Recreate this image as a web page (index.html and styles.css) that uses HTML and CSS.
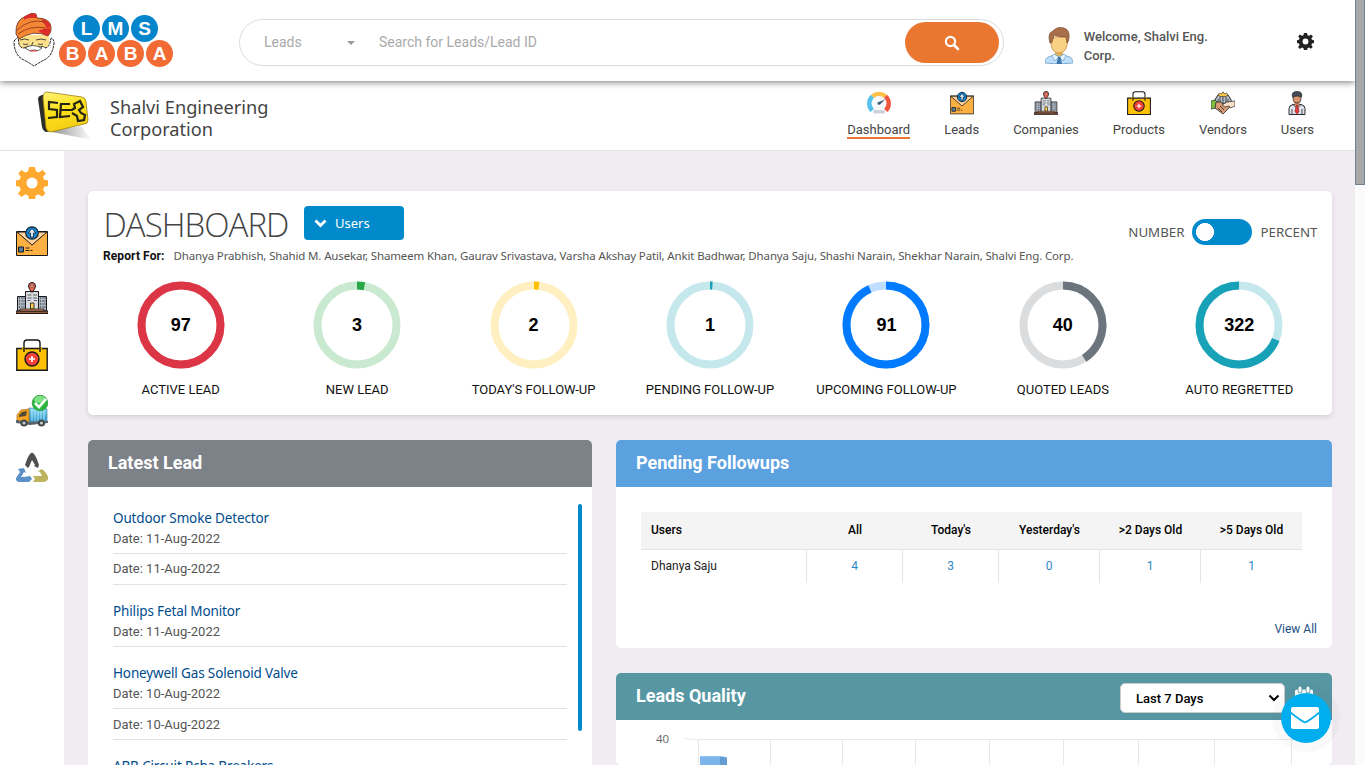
FILE: index.html
```html
<!DOCTYPE html>
<html lang="en">
<head>
<meta charset="utf-8">
<title>LMS Baba - Dashboard</title>
<link rel="stylesheet" href="styles.css">
</head>
<body>
<svg class="sprite" width="0" height="0">
  <symbol id="mail" viewBox="0 0 32 32">
    <path d="M.5 6.500h31v24H.5z" fill="#ffb043" stroke="#17191c"/>
    <path d="M1 7h30L16 20z" fill="#ffd09a" stroke="#17191c"/>
    <circle cx="16" cy="8" r="6.200" fill="#1689d8" stroke="#10202c" stroke-width="1.200"/>
    <path d="M16 3.500l-4 4.500h2.500v4h3V8H20z" fill="#dceaf5" stroke="#10202c" stroke-width=".8"/>
    <path d="M2.500 22h5v5h-5z" fill="#4e7f9c" stroke="#17191c"/>
    <path d="M9.500 23h4M9.500 25.500h4M14.500 25.500h2" stroke="#222" fill="none"/>
  </symbol>
  <symbol id="building" viewBox="0 0 32 32">
    <path d="M1.500 14.500h8V29h-8zM22.500 14.500h8V29h-8z" fill="#adb5bf" stroke="#17191c"/>
    <path d="M3.500 15v12M6 15v12M8 15v12M24.500 15v12M27 15v12M29 15v12" stroke="#59616b" stroke-width=".9" stroke-dasharray="2 1"/>
    <path d="M9.500 9.500h13V29h-13z" fill="#d7dbe0" stroke="#17191c"/>
    <path d="M11.500 13h4M17 13h4M11.500 16h4M17 16h4M11.500 18.500h3M18 18.500h3" stroke="#59616b"/>
    <path d="M14.500 21h3.500v6h-3.500z" fill="#ffc94b" stroke="#17191c" stroke-width=".8"/>
    <path d="M0 29h32v2.500H0z" fill="#9a5638" stroke="#17191c"/><path d="M4 27h24v2H4z" fill="#c98255" stroke="#17191c" stroke-width=".7"/>
    <path d="M16 10.500Q12.500 6.500 12.500 4a3.500 3.500 0 017 0Q19.500 6.500 16 10.500z" fill="#ef6352" stroke="#17191c"/>
    <circle cx="16" cy="4" r="1.300" fill="#ffe0b6" stroke="#17191c" stroke-width=".5"/>
  </symbol>
  <symbol id="bag" viewBox="0 0 32 32">
    <path d="M.8 9.500h30.400v21.700H.8z" fill="#ffc107" stroke="#17191c" stroke-width="1.400"/>
    <path d="M6 9h3M23 9h3" stroke="#ffc107" stroke-width="2"/>
    <path d="M8 13V4q0-3 3-3h10q3 0 3 3v9" fill="none" stroke="#17191c" stroke-width="1.400"/>
    <circle cx="16" cy="20" r="7" fill="#f44336" stroke="#17191c" stroke-width="1.400"/>
    <path d="M16 17v6M13 20h6" stroke="#fff" stroke-width="1.600"/>
  </symbol>
  <symbol id="cog" viewBox="0 0 32 32">
    <path fill-rule="evenodd" d="M13 0h6l.8 4.200 3 1.200L26.500 3 30 6.500l-3 3.300 1.200 3L32 13.500v5.500l-3.800.8-1.200 3 2.500 3.500-3.500 3.500-3.300-2.500-3 1.200L19 32h-6l-.8-3.500-3-1.200L5.500 30 2 26.500l2.800-3.700-1.200-3L0 19v-5.500l3.600-.7 1.200-3L2.200 6.500 5.500 3l3.700 2.400 3-1.200zM16 10.500a5.500 5.500 0 100 11 5.500 5.500 0 000-11z"/>
  </symbol>
</svg>

<header class="topbar">
  <div class="brand">
    <svg class="baba" width="42" height="54" viewBox="0 0 42 54">
      <path d="M5 22h31v14H5z" fill="#fde08a"/>
      <path d="M1 28q3-3 4-4l1 7q1 4 5 4 5-3 9 0 2 1 4 0 6-3 8 0 4-1 5-5l1-5q3 1 3 5-1 11-8 16-6 3-12 7-6-4-12-7Q1 41 1 28z" fill="#fff" stroke="#222" stroke-dasharray="3 .7"/>
      <path d="M3 21Q2 7 13 3 18-1 23 1l1 4q13 0 14 9 1 5-3 9-14-7-29 3z" fill="#f58634" stroke="#5d231c" stroke-width=".8"/>
      <path d="M11 4q7-5 12-3l1 4q-9-1-13 2zM25 18q6-3 12-3 1 5-3 8zM28 6q8 1 10 8l-4 1z" fill="#dd2b2b"/>
      <path d="M4 17Q17 5 32 9M5 21q12-9 28-6" fill="none" stroke="#80331b" stroke-width=".8"/>
      <path d="M7 27q5-2 9 0M23 27q5-2 10 0M10 31q3 1 5 0M25 31q3 1 5 0M20 29l-2 5h5" fill="none" stroke="#333" stroke-width=".9"/>
      <path d="M12 35q7-5 17 0-3 4-8 2-5 2-9-2z" fill="#fff" stroke="#222" stroke-width=".7"/>
      <path d="M17 38h7" stroke="#d33"/>
    </svg>
    <div class="balls">
      <div class="ball-row top"><span>L</span><span>M</span><span>S</span></div>
      <div class="ball-row bottom"><span>B</span><span>A</span><span>B</span><span>A</span></div>
    </div>
  </div>
  <div class="search">
    <span class="search-type">Leads</span><i class="caret"></i>
    <span class="search-hint">Search for Leads/Lead ID</span>
    <span class="search-btn"><svg width="16" height="16" viewBox="0 0 16 16"><circle cx="6.500" cy="6.500" r="4.600" fill="none" stroke="#fff" stroke-width="2.200"/><path d="M10 10l4 4" stroke="#fff" stroke-width="2.600" stroke-linecap="round"/></svg></span>
  </div>
  <div class="welcome">
    <svg width="28" height="37" viewBox="0 0 28 37">
      <path d="M0 36q0-6 6-7l5-2h6l5 2q6 1 6 7-14 2-28 0z" fill="#bfe0fb" stroke="#6b9cc4" stroke-width=".8"/>
      <path d="M10 22h8v6l-4 3-4-3z" fill="#dfb35c"/>
      <path d="M9 27l5 3-4 4-3-5zM19 27l-5 3 4 4 3-5z" fill="#e3f3ff" stroke="#6b9cc4" stroke-width=".7"/>
      <path d="M13 30h2.500l1.500 7h-5.500z" fill="#3e78ad"/>
      <path d="M6 10h16.500q1 16-8.500 16T6 10z" fill="#f9d185" stroke="#b98a46" stroke-width=".7"/>
      <path d="M5 16Q2 6 8 4q4-5 11-3 7 2 4.500 13l-1.500 2-1-6q-8 0-12-2-1 5-2.500 8z" fill="#a96f4b" stroke="#7c4c30" stroke-width=".7"/>
    </svg>
    <span>Welcome, Shalvi Eng. Corp.</span>
  </div>
  <svg class="settings" width="17" height="17"><use href="#cog"/></svg>
</header>

<div class="subbar">
  <div class="company">
    <svg width="56" height="50" viewBox="0 0 56 50">
      <defs><linearGradient id="shade" x1="0" x2="1"><stop offset="0" stop-color="#888"/><stop offset="1" stop-color="#fff"/></linearGradient>
      <linearGradient id="gold" x2=".3" y2="1"><stop offset="0" stop-color="#fff27a"/><stop offset=".5" stop-color="#ffe21c"/><stop offset="1" stop-color="#f3ce16"/></linearGradient></defs>
      <path d="M10 40l34-5 11 14z" fill="url(#shade)"/>
      <path d="M1 8q0-3 4-4l8-2 3 38-7 1q-3-1-4-5z" fill="#2b2b29"/>
      <path d="M10 1l35 5q4 1 4 5l2 18q0 4-4 4L14 41q-4 0-5-4L6 7q0-6 4-6z" fill="url(#gold)" stroke="#9a8211" stroke-width=".8"/>
      <path d="M21 12l-9-1v7l8 1v7l-9 1M33 13l-9 0-1 13 10-1M24 19h11l3-2-1-4 6-3 3 6-4 3 2 3 4 2-1 5-6 1-1-5-5-3" fill="none" stroke="#242315" stroke-width="2.200"/>
    </svg>
    <h2>Shalvi Engineering Corporation</h2>
  </div>
  <nav class="menu">
    <a class="active"><svg width="24" height="24" viewBox="0 0 24 24"><path d="M3.500 21A12 12 0 014 3.700l4 4Q5 12 7 18z" fill="#54c0eb"/><path d="M4 3.700a12 12 0 0116 0l-4 4H8z" fill="#ffc247"/><path d="M20 3.700A12 12 0 0120.500 21L17 18q2-6-1-10.300z" fill="#f05540"/><circle cx="12" cy="12.500" r="7.500" fill="#f8f9fb"/><path d="M10.500 11.500L18 8.500l-5 5q-3 1-2.500-2z" fill="#3c5d76"/><rect x="6" y="19" width="12" height="3.500" rx="1.700" fill="#ccd1dd"/></svg><span>Dashboard</span></a>
    <a><svg width="24" height="24"><use href="#mail"/></svg><span>Leads</span></a>
    <a><svg width="24" height="24"><use href="#building"/></svg><span>Companies</span></a>
    <a><svg width="24" height="24"><use href="#bag"/></svg><span>Products</span></a>
    <a><svg width="24" height="24" viewBox="0 0 24 24"><path d="M4 13q-1-4 1-6l2-3h10l2 3q2 2 1 6z" fill="#b7bcc2" stroke="#252a2e"/><path d="M7 4l1.500-2 2 1L12 .7l1.500 2.300 2-1L17 4l-2 1.500H9z" fill="#ffc845" stroke="#252a2e" stroke-width=".6"/><path d="M9 6v6M15 6v6M7 8v4M17 8v4M12 6v6" stroke="#454d55"/><path d="M0 10l4-1 2 2-1 6-5 1z" fill="#7fc13e" stroke="#252a2e" stroke-width=".7"/><path d="M5 11l5 0 2 2 5-2 2 5-7 7-8-6z" fill="#d79a72" stroke="#252a2e" stroke-width=".8"/><path d="M24 10l-8 1-5 3 3 2 4-1 1 2 5-2z" fill="#fde0c5" stroke="#252a2e" stroke-width=".7"/><path d="M7 17l4 4M9 15l4 4" stroke="#252a2e" stroke-width=".8"/></svg><span>Vendors</span></a>
    <a><svg width="24" height="24" viewBox="0 0 24 24"><path d="M4 23.500v-6q0-3 4-4h8q4 1 4 4v6z" fill="#e1e4ea" stroke="#252a2e"/><path d="M9.500 10h5v4L12 16l-2.500-2z" fill="#c97d58"/><path d="M8 4h8v4q0 4-4 4T8 8z" fill="#dc946c" stroke="#252a2e" stroke-width=".7"/><path d="M7.500 6Q6 .5 12 .5T16.500 6q-4.500-2-9 0z" fill="#454b56" stroke="#252a2e" stroke-width=".7"/><path d="M11 14.500h2l1 6-2 3-2-3z" fill="#e23c3c" stroke="#702020" stroke-width=".5"/><path d="M8 13.500l3 3M16 13.500l-3 3M7 18v6M17 18v6" stroke="#252a2e" stroke-width=".8"/></svg><span>Users</span></a>
  </nav>
</div>

<div class="shell">
  <aside class="side">
    <svg class="gear" width="32" height="32"><use href="#cog"/></svg>
    <svg width="32" height="32"><use href="#mail"/></svg>
    <svg width="32" height="32"><use href="#building"/></svg>
    <svg width="32" height="32"><use href="#bag"/></svg>
    <svg width="32" height="32" viewBox="0 0 32 32"><defs><linearGradient id="box" y2="1" x2="0"><stop offset="0" stop-color="#8bdcf6"/><stop offset="1" stop-color="#238fc6"/></linearGradient></defs><path d="M13 13l18 1v12l-18 1z" fill="url(#box)" stroke="#357c9e" stroke-width=".6"/><path d="M16 14v12M19 14v12M22 14v12M25 14v12M28 14v12" stroke="#c9f0fb" stroke-width=".8"/><path d="M1 20l4-5 8-1v14l-12-2z" fill="#f7a51f" stroke="#a86c10" stroke-width=".7"/><path d="M3 20l3-3 5-1-1 5-7 1z" fill="#554a37"/><path d="M0 25l13 2 19-1v2l-18 2-14-2z" fill="#58626a"/><circle cx="8" cy="28" r="3.600" fill="#41474b"/><circle cx="8" cy="28" r="1.600" fill="#c4c9cc"/><circle cx="25.500" cy="28" r="3.600" fill="#41474b"/><circle cx="25.500" cy="28" r="1.600" fill="#c4c9cc"/><circle cx="24" cy="8" r="7.800" fill="#2ab83e" stroke="#168328" stroke-width=".6"/><ellipse cx="24" cy="4.500" rx="6" ry="3.500" fill="#80e286"/><path d="M19 8l4 4 7-8" fill="none" stroke="#fff" stroke-width="2.600"/></svg>
    <svg width="32" height="32" viewBox="0 0 32 32"><path d="M9 13q3-9 5-11Q16-.5 18 2q2 2 5 11l-1 3-4-2 1-1-3-5-3 7-1 1z" fill="#4e5052"/><path d="M2 17l6-1 2 5-2-1-3 5q5 0 9-1l2 3-3 3H3q-4-1-3-4l4-6z" fill="#5b90c8"/><path d="M22 19l4-2q5 4 6 8 1 4-4 5H17l2-3-2-3h9l-2-4z" fill="#bdb35c"/></svg>
  </aside>

  <main class="content">
    <section class="card summary">
      <div class="summary-head">
        <h1>DASHBOARD</h1>
        <div class="users-btn"><svg width="13" height="9" viewBox="0 0 13 9"><path d="M1.500 1.500l5 5 5-5" fill="none" stroke="#fff" stroke-width="2.800"/></svg><span>Users</span></div>
        <div class="switch"><span class="lbl-number">NUMBER</span><i></i><span class="lbl-percent">PERCENT</span></div>
      </div>
      <p class="report"><b>Report For:</b><span>Dhanya Prabhish, Shahid M. Ausekar, Shameem Khan, Gaurav Srivastava, Varsha Akshay Patil, Ankit Badhwar, Dhanya Saju, Shashi Narain, Shekhar Narain, Shalvi Eng. Corp.</span></p>
      <div class="rings">
        <div class="ring red"><div class="dial"><svg viewBox="0 0 88 88"><circle class="track" cx="44" cy="44" r="39.500"/><circle class="arc" cx="44" cy="44" r="39.500" pathLength="100" stroke-dasharray="100 0"/></svg><b>97</b></div><span>ACTIVE LEAD</span></div>
        <div class="ring green"><div class="dial"><svg viewBox="0 0 88 88"><circle class="track" cx="44" cy="44" r="39.500"/><circle class="arc" cx="44" cy="44" r="39.500" pathLength="100" stroke-dasharray="3 97"/></svg><b>3</b></div><span>NEW LEAD</span></div>
        <div class="ring yellow"><div class="dial"><svg viewBox="0 0 88 88"><circle class="track" cx="44" cy="44" r="39.500"/><circle class="arc" cx="44" cy="44" r="39.500" pathLength="100" stroke-dasharray="2 98"/></svg><b>2</b></div><span>TODAY'S FOLLOW-UP</span></div>
        <div class="ring teal"><div class="dial"><svg viewBox="0 0 88 88"><circle class="track" cx="44" cy="44" r="39.500"/><circle class="arc" cx="44" cy="44" r="39.500" pathLength="100" stroke-dasharray="1 99"/></svg><b>1</b></div><span>PENDING FOLLOW-UP</span></div>
        <div class="ring blue"><div class="dial"><svg viewBox="0 0 88 88"><circle class="track" cx="44" cy="44" r="39.500"/><circle class="arc" cx="44" cy="44" r="39.500" pathLength="100" stroke-dasharray="93.300 6.700"/></svg><b>91</b></div><span>UPCOMING FOLLOW-UP</span></div>
        <div class="ring gray"><div class="dial"><svg viewBox="0 0 88 88"><circle class="track" cx="44" cy="44" r="39.500"/><circle class="arc" cx="44" cy="44" r="39.500" pathLength="100" stroke-dasharray="41 59"/></svg><b>40</b></div><span>QUOTED LEADS</span></div>
        <div class="ring teal reverse"><div class="dial"><svg viewBox="0 0 88 88"><circle class="track" cx="44" cy="44" r="39.500"/><circle class="arc" cx="44" cy="44" r="39.500" pathLength="100" stroke-dasharray="69 31"/></svg><b>322</b></div><span>AUTO REGRETTED</span></div>
      </div>
    </section>

    <div class="columns">
      <section class="panel latest">
        <h3>Latest Lead</h3>
        <div class="latest-body">
          <ul>
            <li class="full"><a>Outdoor Smoke Detector</a><span>Date: 11-Aug-2022</span></li>
            <li><span>Date: 11-Aug-2022</span></li>
            <li class="full"><a>Philips Fetal Monitor</a><span>Date: 11-Aug-2022</span></li>
            <li class="full"><a>Honeywell Gas Solenoid Valve</a><span>Date: 10-Aug-2022</span></li>
            <li><span>Date: 10-Aug-2022</span></li>
            <li class="full"><a>ABB Circuit Pcba Breakers</a></li>
          </ul>
          <i class="list-bar"></i>
        </div>
      </section>
      <div class="right">
        <section class="panel pending">
          <h3>Pending Followups</h3>
          <div class="pending-body">
            <div class="row head"><span>Users</span><span>All</span><span>Today's</span><span>Yesterday's</span><span>&gt;2 Days Old</span><span>&gt;5 Days Old</span></div>
            <div class="row"><span>Dhanya Saju</span><span>4</span><span>3</span><span>0</span><span>1</span><span>1</span></div>
            <a class="view-all">View All</a>
          </div>
        </section>
        <section class="panel quality">
          <div class="quality-head"><h3>Leads Quality</h3>
            <div class="period">Last 7 Days<svg width="12" height="8" viewBox="0 0 12 8"><path d="M1.500 1.500L6 6l4.500-4.500" fill="none" stroke="#000" stroke-width="2"/></svg></div>
            <svg class="cal" width="18" height="20" viewBox="0 0 18 20"><path d="M0 5q0-1.500 2-1.500h14q2 0 2 1.500v14H0z" fill="#fff"/><path d="M5 1.500v3.500M13 1.500v3.500" stroke="#5797a3" stroke-width="4.600" stroke-linecap="round"/><path d="M5 2v3M13 2v3" stroke="#fff" stroke-width="3" stroke-linecap="round"/></svg>
          </div>
          <svg class="chart" width="716" height="45" viewBox="0 0 716 45">
            <text x="40" y="23">40</text>
            <path class="grid" d="M68 18.500l14 1.500M82 19.500H684M82.500 20v25M154.500 20v25M226.500 20v25M299.500 20v25M373.500 20v25M447.500 20v25M522.500 20v25M598.500 20v25M675.500 20v25"/>
            <path d="M84 36.500h20V45H84z" fill="#7cb5ec"/><path d="M104 36.500l7 1V45h-7z" fill="#639bd3"/><path d="M84 36h20l7 1H84z" fill="#93c4f3"/>
          </svg>
        </section>
      </div>
    </div>
  </main>
</div>
<div class="page-scroll"><i></i></div>
<div class="chat"><svg width="28" height="22" viewBox="0 0 28 22"><rect width="28" height="22" rx="2" fill="#fff"/><path d="M-.5 5.500Q10 14 14 15.500 18 14 28.500 5.500" fill="none" stroke="#00aeef" stroke-width="1.800"/></svg></div>
</body>
</html>
```
FILE: styles.css
```css
* { box-sizing: border-box; }
html { overflow: hidden; }
body { margin: 0; width: 1365px; height: 765px; overflow: hidden; background: #fff; font-family: Roboto, sans-serif; font-size: 13px; color: #444; position: relative; }
h1, h2, h3, p, ul { margin: 0; padding: 0; }
svg { display: block; flex: none; }
.sprite { position: absolute; }

.topbar { position: relative; z-index: 2; width: 1355px; height: 81px; display: flex; background: #fff; box-shadow: 0 1px 7px rgba(0,0,0,.55); clip-path: inset(0 0 -14px 0); }
.brand { display: flex; width: 239px; padding: 13px 0 0 13px; }
.balls { padding-top: 2px; margin-left: 3px; }
.ball-row { display: flex; gap: 2px; height: 25px; }
.ball-row.top { padding-left: 15px; }
.ball-row span { width: 27px; height: 27px; border-radius: 50%; color: #fff; font: bold 19px/27px "Liberation Sans", sans-serif; text-align: center; }
.top span { background: #0585cb; }
.bottom span { background: #f26b35; }
.bottom { margin-left: 1px; }
.search { display: flex; align-items: center; width: 765px; height: 47px; margin-top: 19px; border: 1px solid #dcdcdc; border-radius: 24px; padding: 0 4px 0 24px; color: #aaa; font-size: 14px; }
.search-type { width: 83px; padding-bottom: 2px; }
.caret { border: 4px solid transparent; border-top-color: #999; border-bottom: 0; margin-right: 24px; }
.search-hint { flex: 1; padding-bottom: 2px; }
.search-btn { width: 94px; height: 41px; border-radius: 21px; background: #e97730; display: flex; align-items: center; justify-content: center; }
.welcome { display: flex; gap: 10.700px; margin: 27px 0 0 41px; width: 180px; font-weight: 500; line-height: 19px; color: #555; }
.settings { margin: 33px 0 0 72px; fill: #222; }

.subbar { width: 1355px; height: 70px; display: flex; justify-content: space-between; border-bottom: 1px solid #e4e2e5; }
.company { display: flex; gap: 17px; padding: 10px 0 0 37px; }
.company h2 { width: 180px; padding-top: 5px; font: 400 18.200px/22px "Noto Sans", sans-serif; color: #444; }
.menu { display: flex; gap: 34px; padding: 10px 41px 0 0; }
.menu a { display: flex; flex-direction: column; align-items: center; }
.menu span { height: 24px; padding-top: 5px; line-height: 19px; }
.menu .active span { border-bottom: 2px solid #e97730; }

.shell { display: flex; width: 1355px; height: 614px; }
.side { width: 64px; padding: 16px 16px; display: flex; flex-direction: column; gap: 24.700px; background: #fff; }
.gear { fill: #ffa930; margin-bottom: 1.500px; }
.content { flex: 1; background: #f1ecf2; padding: 40px 23px 0 24px; height: 614px; overflow: hidden; }
.card { background: #fff; border-radius: 5px; box-shadow: 0 2px 5px rgba(0,0,0,.12); }
.summary { height: 224px; padding: 15px 4.500px 0; }
.summary-head { display: flex; height: 40px; padding: 0 10px 0 11px; }
.summary-head h1 { width: 200.500px; font: 300 33px/38px "Open Sans", sans-serif; color: #444; letter-spacing: -.95px; }
.users-btn { width: 100px; height: 34px; background: #008acb; border-radius: 4px; color: #fff; display: flex; align-items: center; gap: 8px; padding-left: 10px; font: 13px "Noto Sans", sans-serif; }
.switch { display: flex; align-items: center; gap: 8px; margin-left: auto; padding-top: 12px; font: 13.300px "Noto Sans", sans-serif; color: #555; }
.switch i { width: 60px; height: 26px; border-radius: 13px; background: radial-gradient(circle 9px at 13px 13px, #fff 8.700px, #008acb 9.300px); }
.report { display: flex; gap: 9px; padding-left: 10.500px; font-size: 12px; line-height: 20px; white-space: nowrap; }
.report b { color: #111; font-weight: 700; letter-spacing: .1px; }
.report span { font-family: "Noto Sans", sans-serif; font-size: 11.500px; letter-spacing: -.15px; color: #555; }
.rings { display: grid; grid-template-columns: repeat(7, 1fr); padding-top: 15px; }
.ring { display: flex; flex-direction: column; align-items: center; color: #111; }
.dial { display: grid; width: 88px; height: 88px; place-items: center; }
.dial > * { grid-area: 1 / 1; }
.dial b { font: bold 18px "Liberation Sans", sans-serif; color: #000; }
.ring svg { transform: rotate(-90deg); width: 88px; height: 88px; }
.reverse svg { transform: scaleX(-1) rotate(-90deg); }
.ring span { padding-top: 12px; line-height: 18px; white-space: nowrap; }
.ring circle { fill: none; stroke-width: 8; stroke: currentColor; }
.ring .track { opacity: .25; }
.red svg { color: #dc3545; } .green svg { color: #28a745; } .yellow svg { color: #ffc107; }
.teal svg { color: #17a2b8; } .blue svg { color: #007bff; } .gray svg { color: #6c757d; }

.columns { display: flex; gap: 24px; padding-top: 25px; }
.panel { background: #fff; border-radius: 5px; overflow: hidden; }
.panel h3 { height: 47px; padding-left: 20px; font-size: 18px; line-height: 46px; font-weight: 700; color: #fff; }
.latest { width: 504px; height: 400px; }
.latest h3 { background: #7d8188; }
.latest-body { display: flex; justify-content: space-between; padding: 4.700px 10px 0 25px; }
.latest ul { list-style: none; width: 454px; }
.latest li { height: 30.750px; border-bottom: 1px solid #e2e2e2; padding-top: 5.500px; }
.latest .full { height: 62.300px; padding-top: 16px; }
.latest a { display: block; font: 13.500px/21px "Noto Sans", sans-serif; letter-spacing: -.14px; color: #004c8c; }
.latest li span { display: block; line-height: 20px; color: #555; }
.list-bar { width: 4px; height: 227px; margin-top: 12px; border-radius: 2px; background: #008acb; }
.right { width: 716px; display: flex; flex-direction: column; gap: 25px; }
.pending { height: 208px; }
.pending h3 { background: #5ca1df; }
.pending-body { padding: 25px 15px 0 25px; font-size: 12px; display: flex; flex-direction: column; }
.row { display: grid; grid-template-columns: 166px 96px 96px 101px 101px 101px; width: 661px; height: 33px; line-height: 32px; text-align: center; color: #2a88c5; }
.row span { border-right: 1px solid #e4e4e4; }
.row span:last-child { border: 0; }
.row span:first-child { text-align: left; padding-left: 10px; color: #222; }
.row.head { height: 38px; line-height: 36px; background: #f4f4f4; border-bottom: 1px solid #e4e4e4; font-weight: 500; color: #000; }
.row.head span { border: 0; }
.row.head span:first-child { color: #000; }
.view-all { align-self: flex-end; margin-top: 37px; line-height: 18px; color: #1b4f87; }
.quality-head { display: flex; height: 47px; background: #5797a3; }
.quality-head h3 { flex: 1; }
.period { display: flex; align-items: center; justify-content: space-between; width: 165px; height: 30px; margin-top: 10px; padding: 0 4px 0 15px; border: 1px solid #ccc; border-radius: 5px; background: #fff; color: #000; font-weight: 500; }
.cal { margin: 13px 19px 0 10px; }
.chart text { font: 11.500px "Open Sans", sans-serif; fill: #666; }
.grid { fill: none; stroke: #e8e8e8; }

.page-scroll { position: absolute; top: 0; right: 0; width: 10px; height: 765px; background: #fbfbfb; z-index: 4; }
.page-scroll i { display: block; height: 185px; background: #a8a8a8; border: 1px solid #708090; border-top: 0; }
.chat { position: absolute; z-index: 3; left: 1281px; top: 693px; width: 50px; height: 50px; border-radius: 50%; background: #00aeef; box-shadow: 0 0 0 9px rgba(0,0,0,.025); display: flex; align-items: center; justify-content: center; padding-right: 2px; }
```
